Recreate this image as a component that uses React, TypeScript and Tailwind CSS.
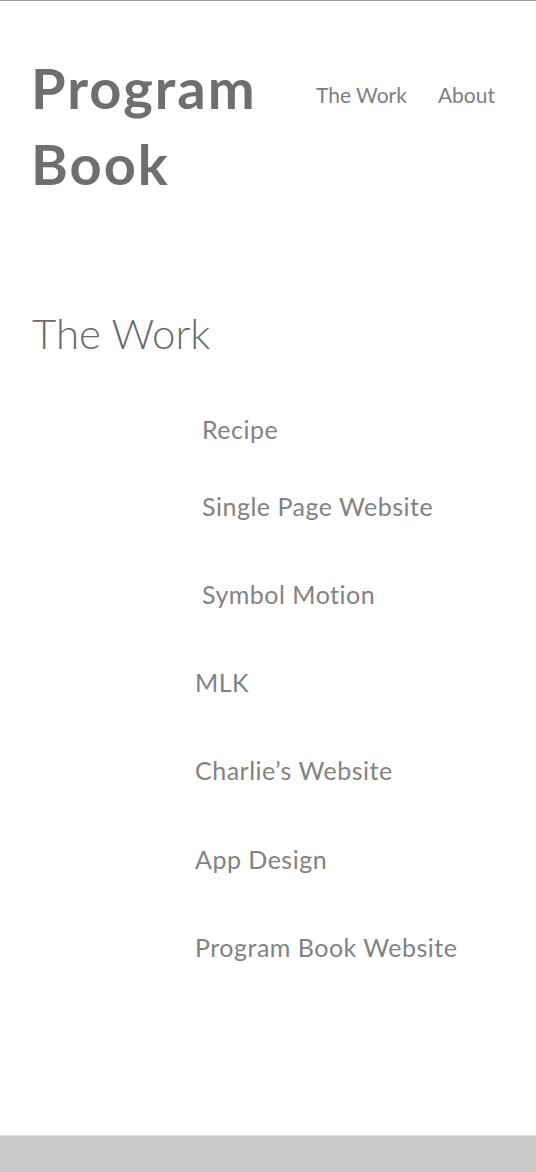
const works = [
  { name: "Recipe", indent: "pl-[202px]", mt: "mt-0" },
  { name: "Single Page Website", indent: "pl-[202px]", mt: "mt-[45px]" },
  { name: "Symbol Motion", indent: "pl-[202px]", mt: "mt-[56px]" },
  { name: "MLK", indent: "pl-[195px]", mt: "mt-[56px]" },
  { name: "Charlie’s Website", indent: "pl-[195px]", mt: "mt-[56px]" },
  { name: "App Design", indent: "pl-[195px]", mt: "mt-[57px]" },
  { name: "Program Book Website", indent: "pl-[195px]", mt: "mt-[56px]" },
];

export default function App() {
  return (
    <div className="w-[536px] h-[1172px] flex flex-col bg-white font-['Lato',sans-serif] text-[#6f6f6f] overflow-hidden">
      <div className="h-px bg-[#9a9a9a]" />

      {/* header */}
      <header className="flex items-start pl-[31px] pt-[49px]">
        <h1 className="text-[56px] leading-[76px] font-bold tracking-[2px] text-[#6f6f6f] w-[285px]">
          Program Book
        </h1>
        <nav className="flex gap-[31px] pt-[31px] text-[21px] leading-[28px] text-[#7e7e7e]">
          <a>The Work</a>
          <a>About</a>
        </nav>
      </header>

      {/* work list */}
      <section className="pt-[103px]">
        <h2 className="pl-[32px] text-[42px] leading-[56px] font-light text-[#6b6b6b]">The Work</h2>
        <ul className="mt-[52px] text-[25px] leading-[32px] tracking-[0.5px] text-[#828282]">
          {works.map((w) => (
            <li key={w.name} className={`${w.indent} ${w.mt}`}>
              {w.name}
            </li>
          ))}
        </ul>
      </section>

      <div className="flex-1" />
      <footer className="h-[37px] bg-[#c8c8c8] border-t border-[#e2e2e2]" />
    </div>
  );
}
